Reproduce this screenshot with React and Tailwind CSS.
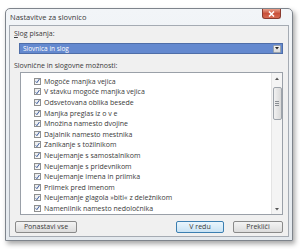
import React from "react";

const items = [
  "Mogoče manjka vejica",
  "V stavku mogoče manjka vejica",
  "Odsvetovana oblika besede",
  "Manjka preglas iz o v e",
  "Množina namesto dvojine",
  "Dajalnik namesto mestnika",
  "Zanikanje s tožilnikom",
  "Neujemanje s samostalnikom",
  "Neujemanje s pridevnikom",
  "Neujemanje imena in priimka",
  "Priimek pred imenom",
  "Neujemanje glagola »biti« z deležnikom",
  "Namenilnik namesto nedoločnika",
];

function Check() {
  return (
    <div className="w-[7px] h-[7px] border border-[#8e8f8f] bg-gradient-to-br from-[#e8e8e8] to-[#ffffff] flex items-center justify-center shrink-0">
      <svg width="6" height="6" viewBox="0 0 6 6">
        <path d="M0.8 3.4 L2.3 5 L5.3 0.6" fill="none" stroke="#3a5a9a" strokeWidth="1.2" />
      </svg>
    </div>
  );
}

function Button({ children, def, className }) {
  return (
    <div
      className={
        "h-[12px] rounded-[2px] border flex items-center justify-center text-[7px] text-[#3a3a3a] " +
        (def
          ? "border-[#3c7fb1] bg-gradient-to-b from-[#eaf6fd] to-[#c9e3f4] "
          : "border-[#8a8a8a] bg-gradient-to-b from-[#f4f4f4] to-[#dcdcdc] ") +
        className
      }
    >
      {children}
    </div>
  );
}

export default function App() {
  return (
    <div
      className="w-[300px] h-[249px] bg-white pt-[8px] pl-[5px]"
      style={{ fontFamily: '"Open Sans", "Noto Sans", sans-serif' }}
    >
      <div className="w-[288px] h-[233px] rounded-t-[5px] border border-[#7e848c] bg-gradient-to-b from-[#f2f5f8] to-[#e4e9ee] shadow-[2px_3px_5px_rgba(0,0,0,0.35)] flex flex-col">
        <div className="h-[16px] flex items-start justify-between pl-[4px] pr-[11px]">
          <span className="text-[7.5px] text-[#3a3a3a] mt-[3px] leading-[10px]">Nastavitve za slovnico</span>
          <div className="w-[19px] h-[10px] rounded-b-[3px] border border-[#8a3a2e] border-t-0 bg-gradient-to-b from-[#e8a08c] via-[#c9503a] to-[#d76a52] flex items-center justify-center">
            <svg width="7" height="6" viewBox="0 0 7 6">
              <path d="M1 0.5 L6 5.5 M6 0.5 L1 5.5" stroke="#ffffff" strokeWidth="1.5" />
            </svg>
          </div>
        </div>
        <div className="mx-[3px] mb-[3px] flex-1 bg-[#f0f0f0] border border-[#a5abb3] flex flex-col pl-[4px] pr-[5px]">
          <div className="text-[7px] text-[#3a3a3a] leading-[9px] mt-[3px]">
            <span className="underline">S</span>log pisanja:
          </div>
          <div className="ml-[5px] mt-[5px] h-[11px] border border-[#4f6ea8] bg-[#6489cf] flex items-center justify-between pl-[3px] pr-[1px]">
            <span className="text-[6.5px] text-white leading-[9px]">Slovnica in slog</span>
            <div className="w-[8px] h-[8px] rounded-[1px] border border-[#9aa3ad] bg-gradient-to-b from-[#f3f3f3] to-[#d9d9d9] flex items-center justify-center">
              <svg width="4" height="3" viewBox="0 0 4 3">
                <path d="M0 0 L4 0 L2 2.5 Z" fill="#222" />
              </svg>
            </div>
          </div>
          <div className="text-[7px] text-[#3a3a3a] leading-[9px] mt-[7px]">
            Slovnične in slogovne možnosti:
          </div>
          <div className="ml-[6px] mt-[2px] h-[143px] border border-[#9aa0a8] bg-white flex">
            <div className="flex-1 pt-[3px] pl-[13px] flex flex-col">
              {items.map((t) => (
                <div key={t} className="h-[10.6px] flex items-center gap-[3px]">
                  <Check />
                  <span className="text-[7px] text-[#3a3a3a] leading-[9px] whitespace-nowrap">{t}</span>
                </div>
              ))}
            </div>
            <div className="w-[11px] bg-[#f4f4f4] border-l border-[#e4e4e4] flex flex-col items-center">
              <div className="h-[10px] w-full flex items-center justify-center">
                <svg width="4" height="3" viewBox="0 0 4 3">
                  <path d="M0 3 L4 3 L2 0.5 Z" fill="#555" />
                </svg>
              </div>
              <div className="mt-[4px] w-[9px] h-[33px] rounded-[2px] border border-[#9ea4ab] bg-gradient-to-r from-[#f1f1f1] to-[#d9d9d9] flex flex-col items-center justify-center gap-[1px]">
                <div className="w-[4px] h-px bg-[#8b8f94]" />
                <div className="w-[4px] h-px bg-[#8b8f94]" />
                <div className="w-[4px] h-px bg-[#8b8f94]" />
              </div>
              <div className="flex-1" />
              <div className="h-[10px] w-full flex items-center justify-center">
                <svg width="4" height="3" viewBox="0 0 4 3">
                  <path d="M0 0 L4 0 L2 2.5 Z" fill="#555" />
                </svg>
              </div>
            </div>
          </div>
          <div className="mt-[6px] flex items-center">
            <Button className="w-[62px] ml-[1px]">Ponastavi vse</Button>
            <div className="flex-1" />
            <Button def className="w-[48px]">V redu</Button>
            <Button className="w-[50px] ml-[9px]">Prekliči</Button>
          </div>
        </div>
      </div>
    </div>
  );
}
